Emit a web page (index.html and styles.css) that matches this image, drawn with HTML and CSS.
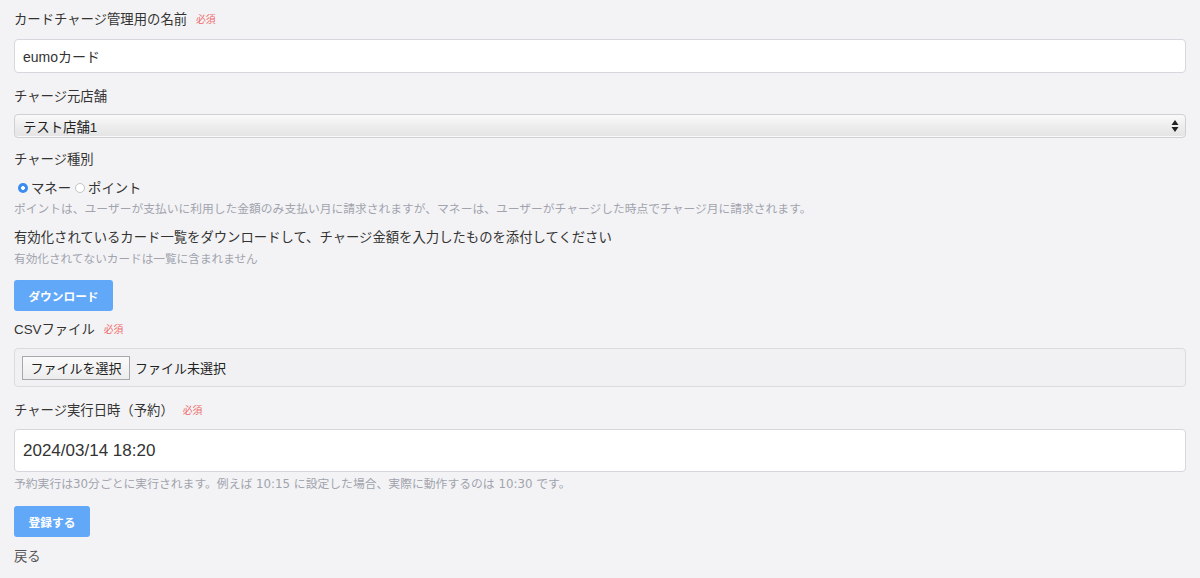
FILE: index.html
```html
<!DOCTYPE html>
<html lang="ja">
<head>
<meta charset="utf-8">
<title>カードチャージ</title>
<link rel="stylesheet" href="styles.css">
</head>
<body>
<form class="page">
  <div class="label">カードチャージ管理用の名前<span class="req">必須</span></div>
  <input class="text-input name-input" type="text" value="eumoカード">

  <div class="label gap-14">チャージ元店舗</div>
  <div class="select">
    <span class="select-text">テスト店舗1</span>
    <svg class="select-arrows" width="8" height="14" viewBox="0 0 8 14"><path d="M4 1 L7.5 6 L0.5 6 Z M4 13 L7.5 8 L0.5 8 Z" fill="#222"/></svg>
  </div>

  <div class="label gap-12">チャージ種別</div>
  <div class="radios">
    <label class="radio"><input type="radio" name="kind" checked><span>マネー</span></label>
    <label class="radio"><input type="radio" name="kind"><span>ポイント</span></label>
  </div>
  <p class="help help-kind">ポイントは、ユーザーが支払いに利用した金額のみ支払い月に請求されますが、マネーは、ユーザーがチャージした時点でチャージ月に請求されます。</p>

  <div class="label gap-11">有効化されているカード一覧をダウンロードして、チャージ金額を入力したものを添付してください</div>
  <p class="help help-tight">有効化されてないカードは一覧に含まれません</p>
  <button type="button" class="btn btn-download">ダウンロード</button>

  <div class="label gap-9">CSVファイル<span class="req">必須</span></div>
  <div class="file-box">
    <button type="button" class="file-btn">ファイルを選択</button>
    <span class="file-text">ファイル未選択</span>
  </div>

  <div class="label gap-14">チャージ実行日時（予約）<span class="req">必須</span></div>
  <input class="text-input date-input" type="text" value="2024/03/14 18:20">
  <p class="help help-date">予約実行は30分ごとに実行されます。例えば 10:15 に設定した場合、実際に動作するのは 10:30 です。</p>

  <button type="button" class="btn btn-submit">登録する</button>
  <a class="back" href="#">戻る</a>
</form>
</body>
</html>
```

FILE: styles.css
```css
html, body {
  margin: 0;
  padding: 0;
  background: #f3f3f5;
}

body {
  font-family: "Liberation Sans", "Noto Sans CJK JP", sans-serif;
  color: #333;
  width: 1200px;
  height: 578px;
  overflow: hidden;
}

.page {
  display: flex;
  flex-direction: column;
  align-items: flex-start;
  padding: 10px 14px 0;
}

.label {
  font-size: 13.35px;
  line-height: 20px;
  height: 20px;
  color: #333;
  white-space: nowrap;
}

.req {
  font-size: 9.8px;
  color: #ee6b6b;
  margin-left: 9px;
  vertical-align: 1px;
}

.gap-14 { margin-top: 14px; }
.gap-12 { margin-top: 12px; }
.gap-11 { margin-top: 11px; }
.gap-9 { margin-top: 9px; }

.text-input {
  box-sizing: border-box;
  width: 1172px;
  margin: 9px 0 0;
  padding: 0 8px;
  border: 1px solid #d6d6dc;
  border-radius: 4px;
  background: #fff;
  color: #333;
  font-family: inherit;
  outline: none;
}

.name-input {
  height: 34px;
  font-size: 14px;
}

.date-input {
  height: 43px;
  font-size: 17px;
  margin-top: 8px;
}

.select {
  box-sizing: border-box;
  width: 1172px;
  height: 24px;
  margin-top: 7px;
  padding: 0 6px 0 8px;
  display: flex;
  align-items: center;
  justify-content: space-between;
  border: 1px solid #cfcfd4;
  border-radius: 4px;
  background: linear-gradient(#fafafa, #ececec 55%, #e4e4e6);
  box-shadow: inset 0 -1px 0 #f8f8f8;
}

.select-text {
  font-size: 13.35px;
  color: #222;
}

.select-arrows {
  display: block;
}

.radios {
  display: flex;
  align-items: center;
  height: 20px;
  margin-top: 7px;
  padding-left: 3px;
}

.radio {
  display: flex;
  align-items: center;
  font-size: 13.35px;
  color: #333;
  margin-right: 3px;
}

.radio input {
  appearance: none;
  -webkit-appearance: none;
  box-sizing: border-box;
  width: 10px;
  height: 10px;
  margin: 2px 3px 0 1px;
  border-radius: 50%;
  border: 1px solid #c4c4c8;
  background: #fff;
}

.radio input:checked {
  border: none;
  background: radial-gradient(circle, #fff 0 1.6px, #3b8cf2 2.2px);
}

.help {
  margin: 1px 0 0;
  font-size: 11.65px;
  line-height: 16px;
  color: #a1a3ad;
  white-space: nowrap;
}

.help-kind {
  margin-top: 4px;
  font-size: 11.77px;
}

.help-tight {
  margin-top: 3px;
}

.help-date {
  margin-top: 4px;
  font-size: 11.82px;
  font-family: "DejaVu Sans", "Noto Sans CJK JP", sans-serif;
}

.btn {
  height: 31px;
  margin-top: 13px;
  border: none;
  border-radius: 3px;
  background: #62a8f9;
  color: #fff;
  font-family: inherit;
  font-size: 11.7px;
  font-weight: bold;
  padding: 0;
}

.btn-download {
  width: 99px;
}

.btn-submit {
  width: 76px;
  margin-top: 14px;
}

.file-box {
  box-sizing: border-box;
  width: 1172px;
  height: 39px;
  margin-top: 8px;
  padding: 0 7px;
  display: flex;
  align-items: center;
  border: 1px solid #dadadf;
  border-radius: 4px;
  background: #f1f1f3;
}

.file-btn {
  box-sizing: border-box;
  height: 24px;
  width: 108px;
  padding: 0;
  border: 1px solid #a8a8ac;
  border-radius: 0;
  background: linear-gradient(#fbfbfb, #ececec);
  font-family: inherit;
  font-size: 13px;
  color: #222;
}

.file-text {
  margin-left: 5px;
  font-size: 13px;
  color: #222;
}

.back {
  margin-top: 10px;
  font-size: 13.35px;
  line-height: 20px;
  color: #555;
  text-decoration: none;
}
```
